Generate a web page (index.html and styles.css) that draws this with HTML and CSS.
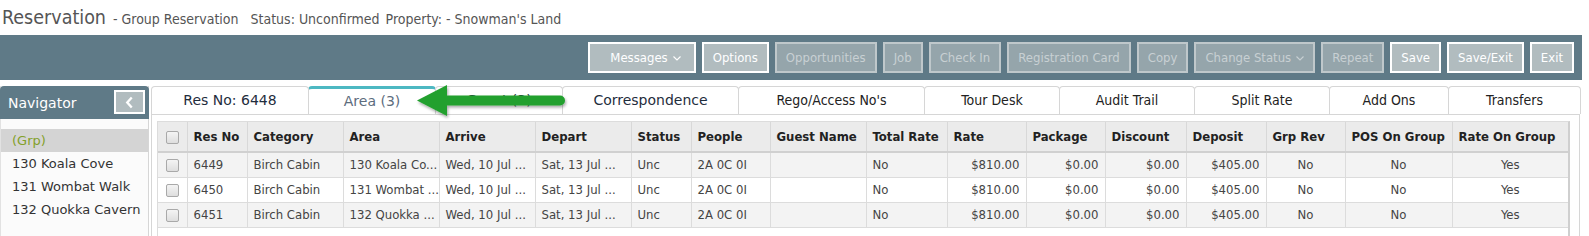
FILE: index.html
```html
<!DOCTYPE html>
<html>
<head>
<meta charset="utf-8">
<link rel="stylesheet" href="styles.css">
</head>
<body>
<div class="page">
  <header class="titlebar">
    <span class="title">Reservation</span>
    <span class="sub">- Group Reservation</span>
    <span class="sub status">Status: Unconfirmed</span>
    <span class="sub">Property: - Snowman's Land</span>
  </header>

  <div class="toolbar">
    <button class="btn on msgs">Messages <svg class="chev" viewBox="0 0 8 5" width="8" height="5"><path d="M0.5 0.5 L4 4 L7.5 0.5" fill="none" stroke="currentColor" stroke-width="1.1"/></svg></button>
    <button class="btn on">Options</button>
    <button class="btn off">Opportunities</button>
    <button class="btn off">Job</button>
    <button class="btn off">Check In</button>
    <button class="btn off">Registration Card</button>
    <button class="btn off">Copy</button>
    <button class="btn off">Change Status <svg class="chev" viewBox="0 0 8 5" width="8" height="5"><path d="M0.5 0.5 L4 4 L7.5 0.5" fill="none" stroke="currentColor" stroke-width="1.1"/></svg></button>
    <button class="btn off">Repeat</button>
    <button class="btn on">Save</button>
    <button class="btn on">Save/Exit</button>
    <button class="btn on">Exit</button>
  </div>

  <div class="main">
    <aside class="nav">
      <div class="nav-head">
        <span>Navigator</span>
        <button class="collapse"><svg viewBox="0 0 10 14" width="9" height="13"><path d="M7.5 1.5 L2.5 7 L7.5 12.5" fill="none" stroke="#ffffff" stroke-width="2.6"/></svg></button>
      </div>
      <ul class="nav-list">
        <li class="grp">(Grp)</li>
        <li>130 Koala Cove</li>
        <li>131 Wombat Walk</li>
        <li>132 Quokka Cavern</li>
      </ul>
    </aside>

    <section class="panel">
      <nav class="tabs">
        <div class="tab t-res">Res No: 6448</div>
        <div class="tab t-area active">Area (3)</div>
        <div class="tab t-guest">Guest (3)</div>
        <div class="tab t-corr">Correspondence</div>
        <div class="tab t-narrow">Rego/Access No's</div>
        <div class="tab t-narrow">Tour Desk</div>
        <div class="tab t-narrow">Audit Trail</div>
        <div class="tab t-narrow">Split Rate</div>
        <div class="tab t-narrow">Add Ons</div>
        <div class="tab t-narrow">Transfers</div>
      </nav>
      <div class="content">
        <div class="grid">
          <table>
            <colgroup>
              <col class="c-cb"><col class="c-resno"><col class="c-96"><col class="c-96"><col class="c-96"><col class="c-96"><col class="c-status"><col class="c-79"><col class="c-96"><col class="c-81"><col class="c-79"><col class="c-79"><col class="c-81"><col class="c-80"><col class="c-79"><col class="c-pos"><col class="c-rog">
            </colgroup>
            <thead>
              <tr>
                <th class="cb"><span class="check"></span></th>
                <th>Res No</th><th>Category</th><th>Area</th><th>Arrive</th><th>Depart</th><th>Status</th><th>People</th><th>Guest Name</th><th>Total Rate</th><th>Rate</th><th>Package</th><th>Discount</th><th>Deposit</th><th>Grp Rev</th><th>POS On Group</th><th>Rate On Group</th>
              </tr>
            </thead>
            <tbody>
              <tr class="odd">
                <td class="cb"><span class="check"></span></td>
                <td>6449</td><td>Birch Cabin</td><td>130 Koala Co...</td><td>Wed, 10 Jul ...</td><td>Sat, 13 Jul ...</td><td>Unc</td><td>2A 0C 0I</td><td></td><td>No</td><td class="r">$810.00</td><td class="r">$0.00</td><td class="r">$0.00</td><td class="r">$405.00</td><td class="c">No</td><td class="c">No</td><td class="c">Yes</td>
              </tr>
              <tr>
                <td class="cb"><span class="check"></span></td>
                <td>6450</td><td>Birch Cabin</td><td>131 Wombat ...</td><td>Wed, 10 Jul ...</td><td>Sat, 13 Jul ...</td><td>Unc</td><td>2A 0C 0I</td><td></td><td>No</td><td class="r">$810.00</td><td class="r">$0.00</td><td class="r">$0.00</td><td class="r">$405.00</td><td class="c">No</td><td class="c">No</td><td class="c">Yes</td>
              </tr>
              <tr class="odd">
                <td class="cb"><span class="check"></span></td>
                <td>6451</td><td>Birch Cabin</td><td>132 Quokka ...</td><td>Wed, 10 Jul ...</td><td>Sat, 13 Jul ...</td><td>Unc</td><td>2A 0C 0I</td><td></td><td>No</td><td class="r">$810.00</td><td class="r">$0.00</td><td class="r">$0.00</td><td class="r">$405.00</td><td class="c">No</td><td class="c">No</td><td class="c">Yes</td>
              </tr>
            </tbody>
          </table>
        </div>
      </div>
    </section>
  </div>

  <svg class="arrow" viewBox="0 0 160 40" width="160" height="40">
    <defs>
      <filter id="sh" x="-10%" y="-30%" width="130%" height="170%">
        <feGaussianBlur in="SourceAlpha" stdDeviation="1.5"/>
        <feOffset dx="1" dy="2" result="b"/>
        <feComponentTransfer><feFuncA type="linear" slope="0.35"/></feComponentTransfer>
        <feMerge><feMergeNode/><feMergeNode in="SourceGraphic"/></feMerge>
      </filter>
    </defs>
    <g filter="url(#sh)">
      <line x1="32" y1="19.5" x2="145" y2="19.5" stroke="#22a02f" stroke-width="10" stroke-linecap="round"/>
      <polygon points="2,19.5 32,4 32,35" fill="#22a02f"/>
    </g>
  </svg>
</div>
</body>
</html>
```

FILE: styles.css
```css
* { box-sizing: border-box; }
html, body { margin: 0; padding: 0; background: #ffffff; }
body {
  font-family: "DejaVu Sans Condensed", "DejaVu Sans", sans-serif;
  font-size: 13px;
  color: #333333;
}
.page { position: relative; width: 1589px; height: 236px; overflow: hidden; }

/* title */
.titlebar {
  height: 35px;
  display: flex;
  align-items: baseline;
  padding: 6px 0 0 2px;
  color: #555555;
  white-space: nowrap;
}
.title { font-size: 19.5px; color: #555555; margin-right: 7px; }
.sub { font-size: 14px; color: #555555; margin-right: 6px; }
.status { margin-left: 6px; }

/* toolbar */
.toolbar {
  height: 45px;
  width: 1582px;
  background: #5f7a87;
  display: flex;
  justify-content: flex-end;
  align-items: flex-start;
  gap: 6px;
  padding: 7px 8px 0 0;
}
.btn {
  height: 31px;
  padding: 0 9px;
  border: 2px solid #ffffff;
  background: #b1bcbf;
  color: #ffffff;
  font-family: "DejaVu Sans Condensed", "DejaVu Sans", sans-serif;
  font-size: 13px;
  display: flex;
  align-items: center;
  gap: 5px;
  white-space: nowrap;
}
.btn.msgs { padding: 0 13px 0 20px; }
.btn.off {
  background: #95a5ab;
  border-color: #bfc8cb;
  color: #c8d0d3;
}
.chev { margin-top: 1px; }

/* main */
.main {
  display: flex;
  align-items: flex-start;
  gap: 2px;
  padding-top: 6px;
}

/* navigator */
.nav {
  width: 149px;
  flex: none;
  height: 160px;
  background: #fbfbfb;
  border-right: 1px solid #d6d6d6;
  border-left: 1px solid #e2e2e2;
}
.nav-head {
  height: 33px;
  background: #5f7a87;
  border-radius: 4px 4px 0 0;
  margin-left: -1px;
  margin-right: -1px;
  display: flex;
  align-items: center;
  justify-content: space-between;
  padding: 0 4px 0 8px;
  color: #ffffff;
  font-family: "DejaVu Sans", sans-serif;
  font-size: 14px;
}
.collapse {
  width: 31px;
  height: 24px;
  margin-top: -1px;
  border: 2px solid #ffffff;
  background: #b1bcbf;
  padding: 0;
  display: flex;
  align-items: center;
  justify-content: center;
}
.nav-list {
  list-style: none;
  margin: 0;
  padding: 10px 0 0 0;
  font-family: "DejaVu Sans", sans-serif;
  font-size: 13px;
  color: #333333;
}
.nav-list li {
  height: 23px;
  line-height: 23px;
  padding-left: 11px;
}
.nav-list li.grp { background: #d4d4d4; color: #83a02a; }

/* panel */
.panel {
  flex: 1;
  margin-right: 12px;
}
.tabs {
  display: grid;
  grid-template-columns: 157px 127px 127px 176px 186px 135px 135px 135px 119px 1fr;
  height: 29px;
  border-bottom: 1px solid #d6d6d6;
}
.tab {
  border: 1px solid #d6d6d6;
  border-bottom: none;
  border-radius: 4px 4px 0 0;
  background: #ffffff;
  display: flex;
  align-items: center;
  justify-content: center;
  font-family: "DejaVu Sans", sans-serif;
  font-size: 14px;
  color: #1f2d3d;
  white-space: nowrap;
  margin-right: -1px;
  padding-bottom: 1px;
}
.tab.active {
  border-top: 3px solid #4db8c2;
  color: #5d6d7e;
}
.tab.t-narrow {
  font-family: "DejaVu Sans Condensed", "DejaVu Sans", sans-serif;
  font-size: 14px;
  color: #222222;
}
.content {
  height: 130px;
  border-left: 1px solid #d6d6d6;
  border-right: 1px solid #d6d6d6;
  padding: 6px 9px 0 5px;
  background: #ffffff;
}
.grid {
  height: 130px;
  border: 1px solid #dcdcdc;
  border-right: 2px solid #cfcfcf;
  background: #ffffff;
}
table {
  border-collapse: collapse;
  table-layout: fixed;
  width: 1409px;
  font-size: 13px;
}
col.c-cb { width: 29px; }
col.c-resno { width: 60px; }
col.c-96 { width: 96px; }
col.c-status { width: 60px; }
col.c-79 { width: 79px; }
col.c-80 { width: 80px; }
col.c-81 { width: 81px; }
col.c-pos { width: 107px; }
col.c-rog { width: 116px; }

th {
  height: 30px;
  background: #ebebeb;
  border-right: 1px solid #d8d8d8;
  border-bottom: 2px solid #d0d0d0;
  text-align: left;
  font-weight: bold;
  color: #222222;
  padding: 0 6px;
  white-space: nowrap;
  overflow: hidden;
}
td {
  height: 25px;
  border-right: 1px solid #dcdcdc;
  border-bottom: 1px solid #dcdcdc;
  padding: 0 6px;
  white-space: nowrap;
  overflow: hidden;
  color: #444444;
  background: #ffffff;
}
tr.odd td { background: #f3f3f3; }
th:last-child, td:last-child { border-right: none; }
td.r { text-align: right; }
td.c { text-align: center; }
th.cb, td.cb { padding: 0; text-align: center; }
.check {
  display: inline-block;
  width: 13px;
  height: 13px;
  border: 1px solid #a9a9a9;
  border-radius: 2px;
  background: linear-gradient(#f4f4f4, #dedede);
  vertical-align: middle;
}

/* annotation arrow */
.arrow {
  position: absolute;
  left: 415px;
  top: 81px;
}
```
